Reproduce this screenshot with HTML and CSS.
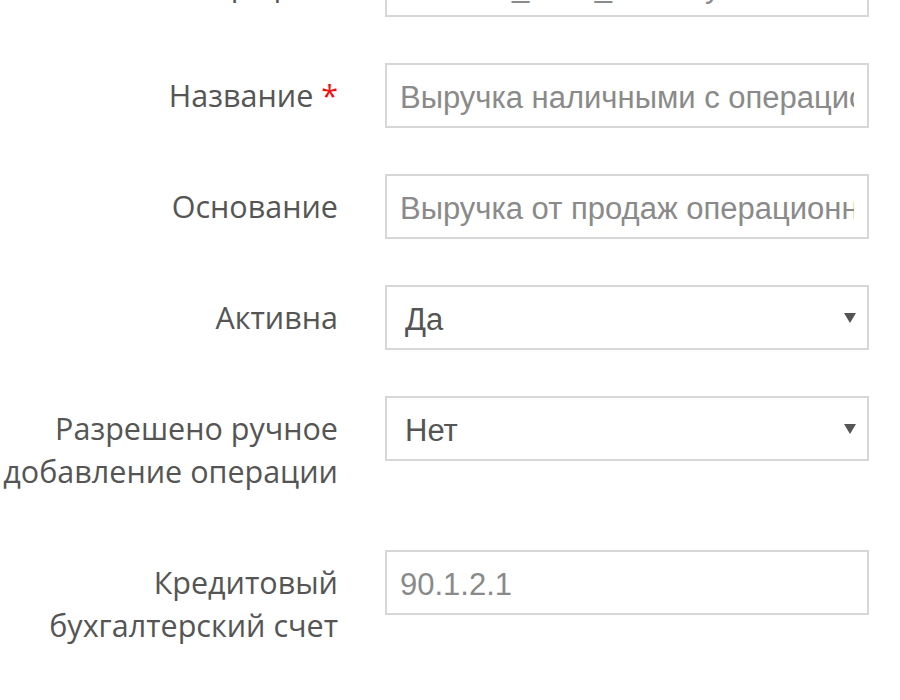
FILE: index.html
```html
<!DOCTYPE html>
<html lang="ru">
<head>
<meta charset="utf-8">
<title>Тип операции</title>
<link rel="stylesheet" href="styles.css">
</head>
<body>
<form class="form">
  <div class="row">
    <div class="label">Префикс</div>
    <div class="field input"><span class="val">revenue_cash_monthly</span></div>
  </div>
  <div class="row">
    <div class="label">Название <span class="req">*</span></div>
    <div class="field input"><span class="val">Выручка наличными с операционной кассы</span></div>
  </div>
  <div class="row">
    <div class="label">Основание</div>
    <div class="field input"><span class="val">Выручка от продаж операционной кассы</span></div>
  </div>
  <div class="row">
    <div class="label">Активна</div>
    <div class="field select"><span class="val">Да</span><span class="caret"></span></div>
  </div>
  <div class="row">
    <div class="label">Разрешено ручное<br>добавление операции</div>
    <div class="field select"><span class="val">Нет</span><span class="caret"></span></div>
  </div>
  <div class="row">
    <div class="label">Кредитовый<br>бухгалтерский счет</div>
    <div class="field input"><span class="val">90.1.2.1</span></div>
  </div>
</form>
</body>
</html>
```

FILE: styles.css
```css
html, body {
  margin: 0;
  padding: 0;
  background: #ffffff;
}

body {
  font-family: "Open Sans", "DejaVu Sans", sans-serif;
  overflow: hidden;
}

.form {
  margin-top: -48px;
  display: flex;
  flex-direction: column;
  gap: 46px;
}

.row {
  display: grid;
  grid-template-columns: 338px 484px;
  column-gap: 47px;
  align-items: start;
}

.label {
  text-align: right;
  font-size: 30.5px;
  line-height: 43px;
  padding: 11px 0;
  color: #555555;
  white-space: nowrap;
}

.req {
  color: #ee1111;
}

.field {
  box-sizing: border-box;
  height: 65px;
  border: 2px solid #d7d7d7;
  background: #ffffff;
  display: flex;
  align-items: center;
  font-family: "Liberation Sans", Arial, sans-serif;
  font-size: 31px;
  padding-top: 4px;
}

.input {
  padding-left: 13px;
  padding-right: 13px;
  color: #8a8a8a;
}

.select {
  padding-left: 18px;
  padding-right: 11px;
  color: #555555;
}

.val {
  flex: 1;
  min-width: 0;
  overflow: hidden;
  white-space: nowrap;
}

.caret {
  width: 0;
  height: 0;
  border-left: 6px solid transparent;
  border-right: 6px solid transparent;
  border-top: 10px solid #555555;
  margin-bottom: 4px;
}
```
